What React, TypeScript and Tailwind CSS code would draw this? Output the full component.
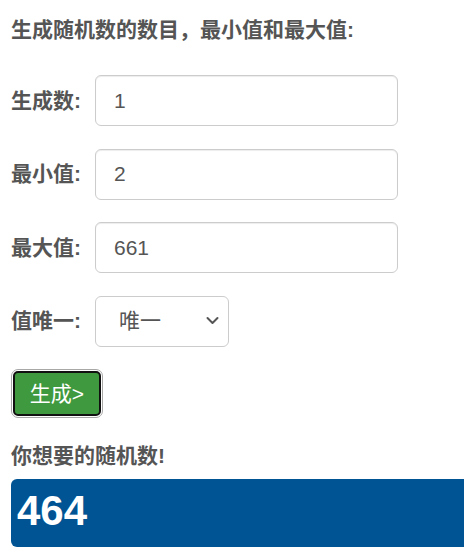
import React from "react";

const FONT = { fontFamily: '"Liberation Sans", "Noto Sans CJK SC", sans-serif' };

function Field({ label, value }: { label: string; value: string }) {
  return (
    <div className="flex items-center">
      <label className="w-[84px] shrink-0 text-[21px] font-bold leading-[30px] text-[#555]">{label}</label>
      <input
        readOnly
        value={value}
        className="h-[51px] w-[303px] rounded-[6px] border border-[#ccc] bg-white px-[18px] text-[21px] text-[#555] outline-none shadow-[inset_0_1px_1px_rgba(0,0,0,0.075)]"
        style={FONT}
      />
    </div>
  );
}

export default function App() {
  return (
    <div className="w-full overflow-hidden bg-white" style={FONT}>
      <div className="pl-[11px] pt-[15px] pb-[2px]">
        <h4 className="text-[21px] font-bold leading-[30px] text-[#555]">生成随机数的数目，最小值和最大值:</h4>
        <div className="mt-[30px] flex flex-col gap-[22.5px]">
          <Field label="生成数:" value="1" />
          <Field label="最小值:" value="2" />
          <Field label="最大值:" value="661" />
          <div className="flex items-center">
            <label className="w-[84px] shrink-0 text-[21px] font-bold leading-[30px] text-[#555]">值唯一:</label>
            <div className="relative h-[51px] w-[134px] rounded-[6px] border border-[#ccc] bg-white">
              <span className="absolute left-[23px] top-[9px] text-[21px] leading-[30px] text-[#555]">唯一</span>
              <svg
                className="absolute right-[9px] top-[19px]"
                width="13"
                height="9"
                viewBox="0 0 13 9"
                fill="none"
              >
                <path d="M1.5 2 L6.5 7 L11.5 2" stroke="#555" strokeWidth="2" strokeLinecap="round" strokeLinejoin="round" />
              </svg>
            </div>
          </div>
        </div>
        <div className="mt-[22px] inline-flex rounded-[7px] border border-[#a8a8a8] p-px">
          <button
            className="flex h-[45px] w-[88px] items-center justify-center rounded-[5px] border-2 border-[#111] bg-[#3f9a3f] text-[21px] leading-none text-white"
            style={FONT}
          >
            生成&gt;
          </button>
        </div>
        <h4 className="mt-[23px] text-[21px] font-bold leading-[30px] text-[#555]">你想要的随机数!</h4>
        <div className="mt-[8px] flex h-[68px] w-[470px] items-center rounded-[6px] bg-[#015494] pl-[6px] pb-[4px]">
          <span className="text-[42px] font-bold leading-none text-white">464</span>
        </div>
      </div>
    </div>
  );
}
